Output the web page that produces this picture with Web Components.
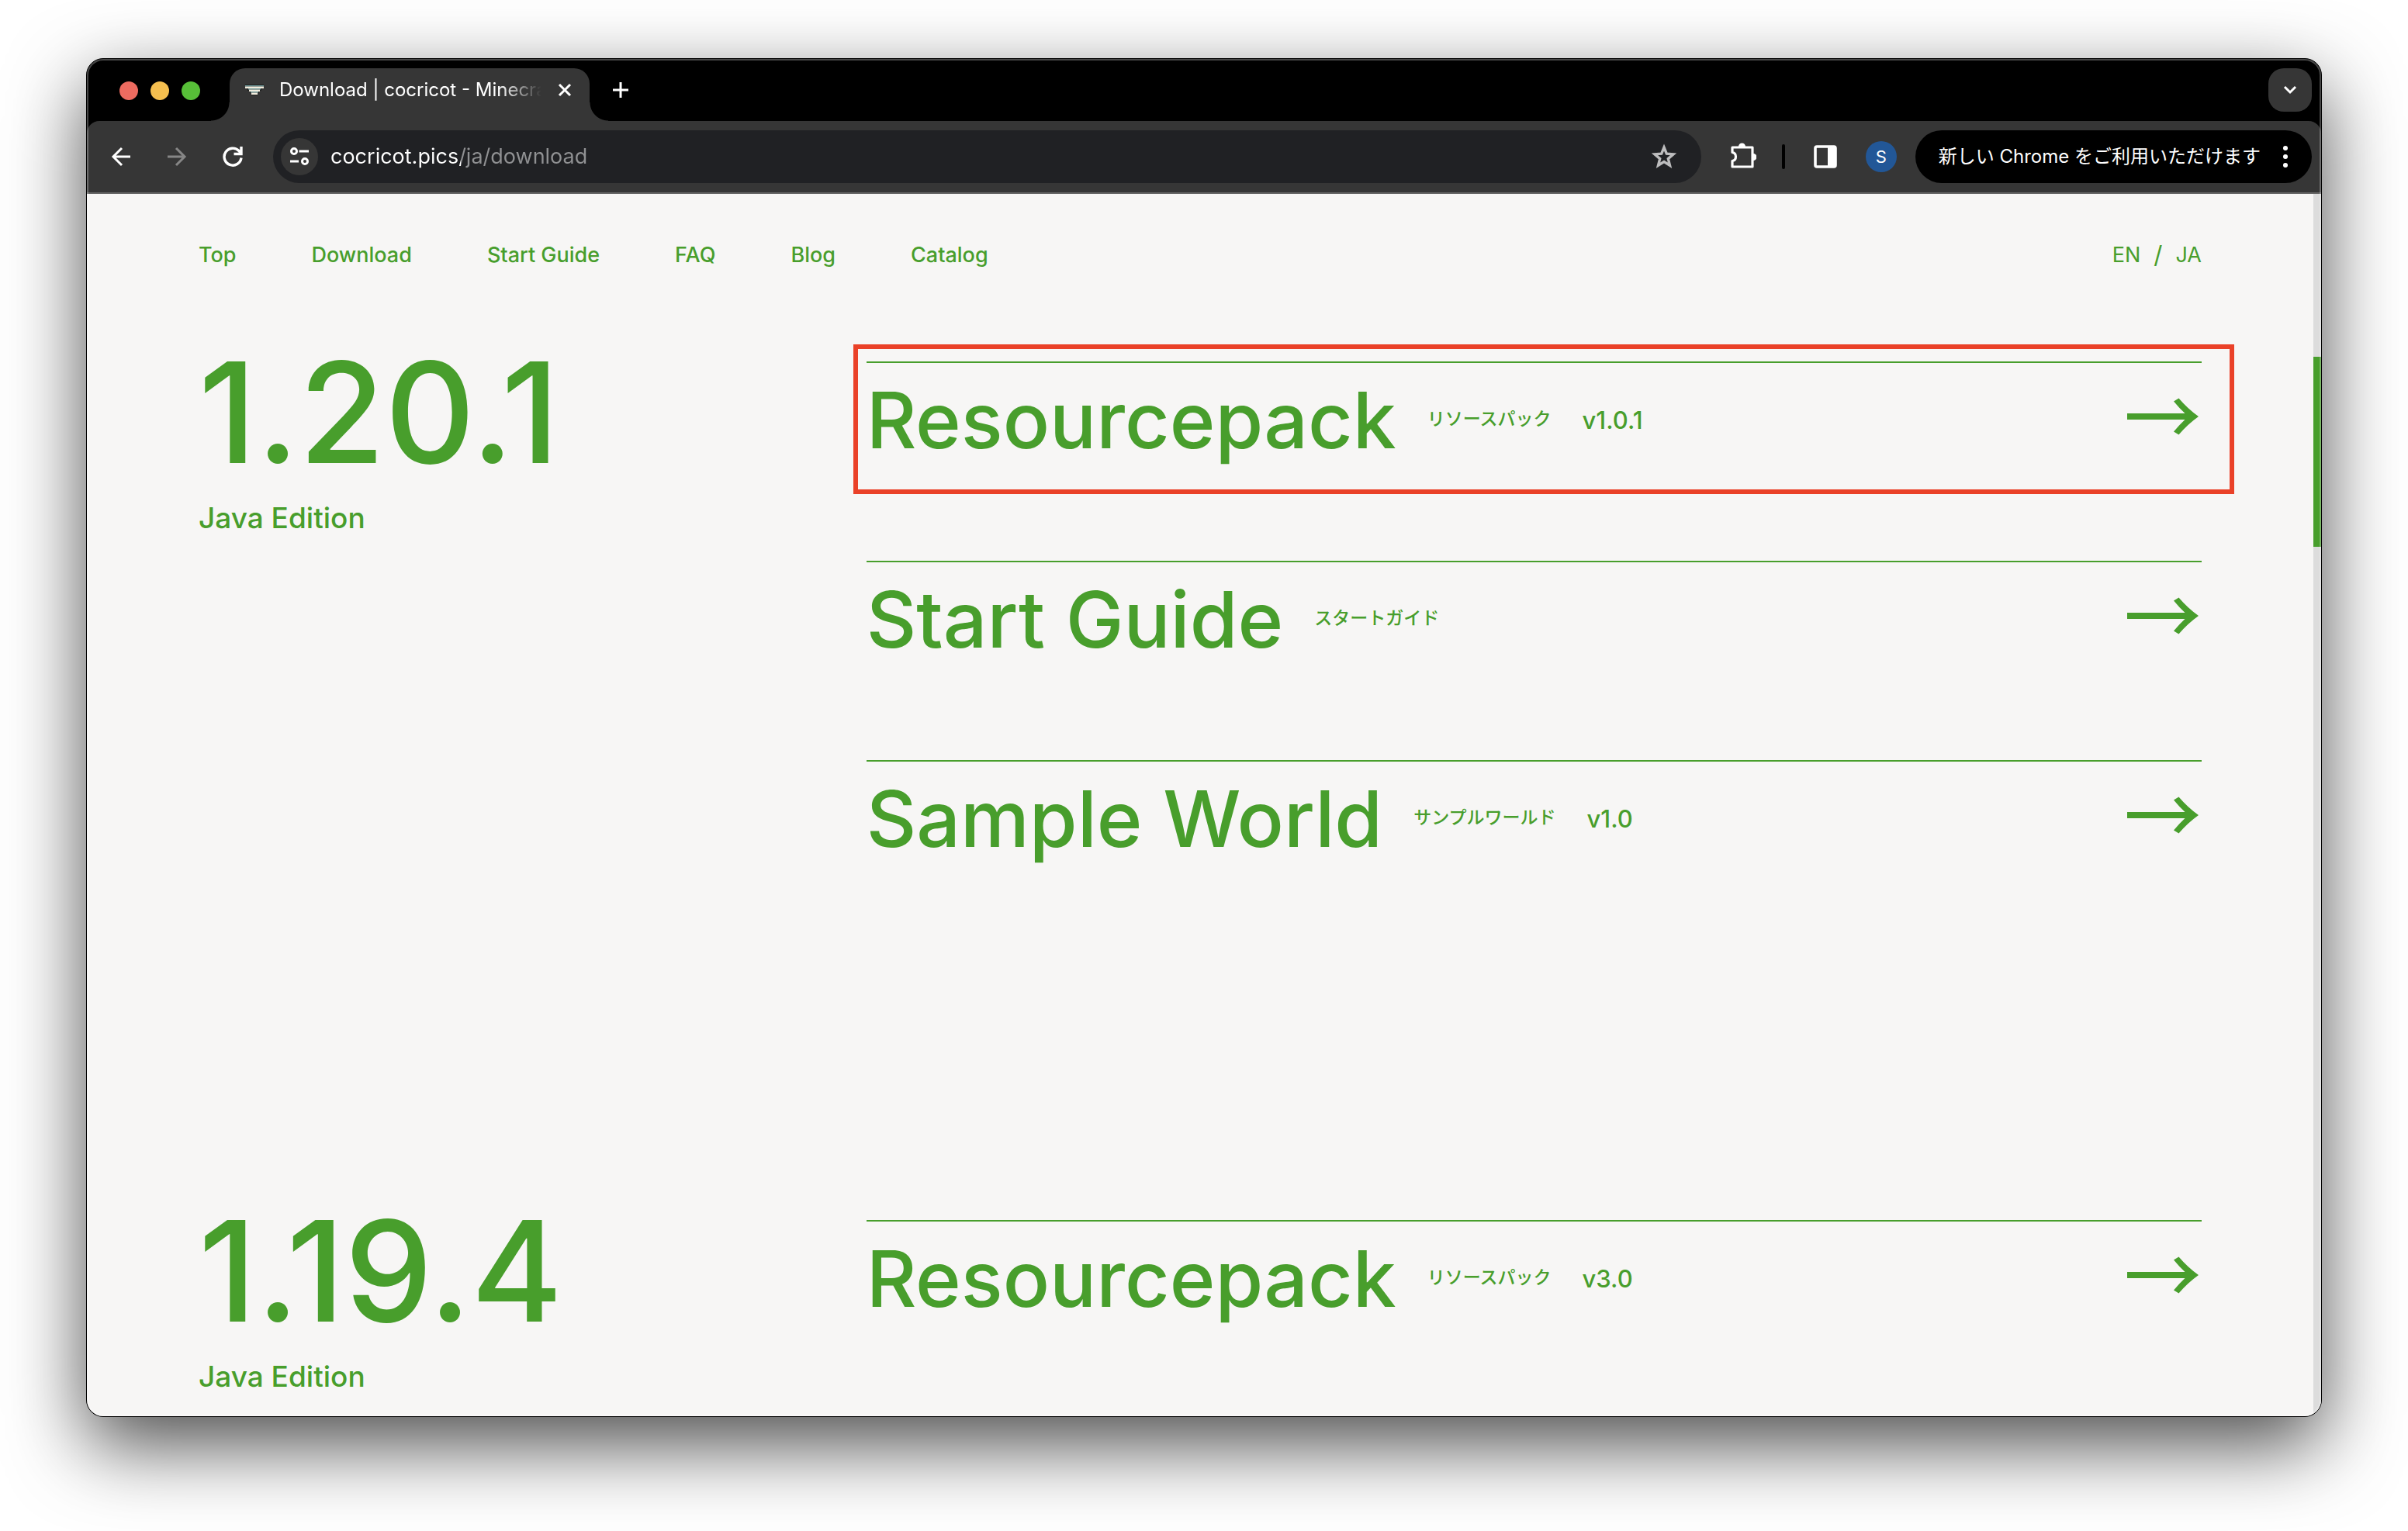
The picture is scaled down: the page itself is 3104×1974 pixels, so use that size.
<!DOCTYPE html>
<html lang="ja">
<head>
<meta charset="utf-8">
<title>Download | cocricot - Minecraft</title>
<style>
  html { height: 100%; background: #fff; }
  body {
    margin: 0; height: 100vh; box-sizing: border-box;
    padding: 75px 111px 147px; display: grid;
    font-family: Inter, "Noto Sans CJK JP", sans-serif;
  }
</style>
</head>
<body>
<browser-window>
  <tab-strip slot="tabs" label="Download | cocricot - Minecra"></tab-strip>
  <browser-toolbar slot="toolbar"></browser-toolbar>
  <site-header></site-header>
  <version-group version="1.20.1" edition="Java Edition">
    <download-item name="Resourcepack" caption="リソースパック" release="v1.0.1" highlighted></download-item>
    <download-item name="Start Guide" caption="スタートガイド"></download-item>
    <download-item name="Sample World" caption="サンプルワールド" release="v1.0"></download-item>
  </version-group>
  <version-group version="1.19.4" edition="Java Edition">
    <download-item name="Resourcepack" caption="リソースパック" release="v3.0"></download-item>
  </version-group>
</browser-window>

<script>
const RESET = `
  :host, *, *::before, *::after { box-sizing: border-box; }
  a { color: inherit; text-decoration: none; }
  button { font: inherit; color: inherit; background: none; border: 0; padding: 0; margin: 0;
    display: grid; place-items: center; flex: none; }
  svg { display: block; fill: none; stroke: currentColor; }
`;

class BaseElement extends HTMLElement {
  connectedCallback() {
    if (this.shadowRoot) return;
    this.attachShadow({ mode: 'open' }).innerHTML = `<style>${RESET}${this.css()}</style>${this.html()}`;
  }
}

customElements.define('browser-window', class extends BaseElement {
  css() { return `
    :host { display: grid; min-height: 0; border: 1px solid #000; border-radius: 22px;
      position: relative; background: #000; box-shadow: 0 36px 100px rgba(0,0,0,.7); }
    .frame { display: flex; flex-direction: column; min-height: 0; overflow: hidden; border-radius: 21px; }
    .edge { position: absolute; inset: 0; border: 2px solid rgba(255,255,255,.28);
      border-radius: 21px; pointer-events: none; }
    .view { flex: 1; min-height: 0; display: flex; background: #f7f6f5; color: #489e2c; }
    main { flex: 1; min-width: 0; padding: 0 5%; overflow: hidden; }
    .scroll { flex: none; width: 10px; background: #dcdcdc; padding-top: 210px; }
    .thumb { height: 245px; background: #489e2c; }
  `; }
  html() { return `
    <div class="frame">
      <slot name="tabs"></slot>
      <slot name="toolbar"></slot>
      <div class="view"><main><slot></slot></main><div class="scroll"><div class="thumb"></div></div></div>
    </div>
    <div class="edge"></div>`; }
});

customElements.define('tab-strip', class extends BaseElement {
  css() { return `
    :host { display: flex; flex: none; height: 80px; padding: 12px 12px 0 42px; background: #000; color: #fff; }
    .lights { display: flex; gap: 16px; padding-top: 17px; margin-right: 38px; }
    .lights button { width: 24px; height: 24px; border-radius: 50%; }
    .tab { position: relative; display: flex; align-items: center; width: 464px; height: 68px;
      padding: 0 18px 12px 20px; background: #363636; border-radius: 20px 20px 0 0; }
    .tab::before, .tab::after { content: ""; position: absolute; bottom: 0; width: 24px; height: 24px; }
    .tab::before { right: 100%; background: radial-gradient(circle at 0 0, transparent 23px, #363636 24px); }
    .tab::after { left: 100%; background: radial-gradient(circle at 100% 0, transparent 23px, #363636 24px); }
    .title { flex: 1; min-width: 0; margin: 0 16px 0 20px; white-space: nowrap;
      font-size: 24px; line-height: 32px; font-weight: 400;
      -webkit-mask-image: linear-gradient(90deg, #000 84%, transparent); mask-image: linear-gradient(90deg, #000 84%, transparent); }
    .close { width: 28px; height: 28px; }
    .new { width: 56px; height: 56px; margin-left: 12px; }
    .search { width: 56px; height: 56px; margin-left: auto; border-radius: 20px; background: #363636; }
  `; }
  html() { return `
    <div class="lights">
      <button aria-label="Close window" style="background:#ed6b60"></button>
      <button aria-label="Minimize" style="background:#f5bf4f"></button>
      <button aria-label="Zoom" style="background:#57bf38"></button>
    </div>
    <div class="tab">
      <svg width="24" height="14" viewBox="0 0 24 14" style="stroke:none">
        <path fill="#1d1f1e" d="M0 0h24v5h-3v3h-3v3h-2v3H8v-3H6V8H3V5H0z"/>
        <path fill="#6f9a9c" d="M0 1h24v1.500H0zM4 5h16v1.500H4zM7 9h10v1.500H7z"/>
        <path fill="#f1ecdd" d="M0 2.500h24V5H0zM5 6.500h14V9H5zM8 10.500h8V13H8z"/>
      </svg>
      <span class="title">${this.getAttribute('label')}</span>
      <button class="close" aria-label="Close tab"><svg width="18" height="18" viewBox="0 0 18 18" stroke-width="3"><path d="M2 2l14 14M16 2L2 16"/></svg></button>
    </div>
    <button class="new" aria-label="New tab"><svg width="20" height="20" viewBox="0 0 20 20" stroke-width="3"><path d="M10 0v20M0 10h20"/></svg></button>
    <button class="search" aria-label="Search tabs"><svg width="18" height="12" viewBox="0 0 18 12" stroke-width="3"><path d="M2 2l7 7 7-7"/></svg></button>`; }
});

customElements.define('browser-toolbar', class extends BaseElement {
  css() { return `
    :host { display: block; flex: none; background: #000; color: #fff; }
    .bar { display: flex; align-items: center; height: 94px; padding: 0 12px 0 18px;
      background: #363636; border-bottom: 2px solid #666; border-radius: 16px 16px 0 0; }
    .nav { display: flex; gap: 20px; margin-right: 26px; }
    .nav button { width: 52px; height: 52px; }
    .off { color: #868686; }
    .box { flex: 1; min-width: 0; display: flex; align-items: center; height: 68px; border-radius: 34px;
      background: #202124; padding: 0 26px 0 10px; }
    .chip { width: 48px; height: 48px; border-radius: 50%; background: #363636; }
    input { flex: 1; min-width: 0; margin: 0 20px 0 16px; padding: 0; border: 0; outline: 0; font: inherit;
      font-size: 27px; line-height: 40px; height: 40px; color: transparent;
      background: linear-gradient(90deg, #fff 168px, #909193 168px);
      -webkit-background-clip: text; background-clip: text; }
    .star { width: 44px; height: 44px; color: #bcbcbd; }
    .ext { width: 52px; height: 52px; margin-left: 27px; }
    .rule { width: 4px; height: 32px; border-radius: 2px; background: #000; margin: 0 26px 0 25px; }
    .avatar { width: 40px; height: 40px; border-radius: 50%; background: #225797; font-size: 22px; margin: 0 24px 0 26px; }
    .update { display: flex; align-items: center; height: 68px; padding: 0 30px; gap: 28px;
      border-radius: 34px; background: #000; font-size: 24px; line-height: 36px; font-weight: 400; white-space: nowrap; }
  `; }
  html() { return `
    <div class="bar">
      <div class="nav">
        <button aria-label="Back"><svg width="26" height="26" viewBox="0 0 26 26" stroke-width="3"><path d="M25 13H3M14 2L3 13l11 11"/></svg></button>
        <button class="off" aria-label="Forward"><svg width="26" height="26" viewBox="0 0 26 26" stroke-width="3"><path d="M1 13h22M12 2l11 11-11 11"/></svg></button>
        <button aria-label="Reload"><svg width="28" height="28" viewBox="0 0 28 28" stroke-width="3.400"><path d="M25 15.500A11 11 0 1 1 22 6.500L24.500 9M25 1v9.500H15.500"/></svg></button>
      </div>
      <div class="box">
        <button class="chip" aria-label="Site information"><svg width="26" height="24" viewBox="0 0 26 24" stroke-width="3"><circle cx="6" cy="5" r="3.500"/><path d="M12.500 5H25M1 18h11"/><circle cx="20" cy="18" r="3.500"/></svg></button>
        <input type="text" aria-label="Address" value="cocricot.pics/ja/download">
        <button class="star" aria-label="Bookmark"><svg width="34" height="34" viewBox="0 0 34 34" stroke-width="3.400"><path d="M17 5l3.300 8.200 8.700.700-6.700 5.700 2.200 8.600L17 23.500l-7.500 4.700 2.200-8.600L5 13.900l8.700-.700z"/></svg></button>
      </div>
      <button class="ext" aria-label="Extensions"><svg width="36" height="36" viewBox="0 0 36 36" stroke-width="3.200" stroke-linejoin="round"><path d="M5 6h26v25H5v-7.500c6-1 6-10 0-11z"/><path d="M13 5a4.500 4.500 0 0 1 9 0zM32 14a4.500 4.500 0 0 1 0 9z" style="fill:currentColor;stroke:none"/></svg></button>
      <div class="rule"></div>
      <button class="ext" style="margin:0" aria-label="Side panel"><svg width="30" height="30" viewBox="0 0 30 30"><rect x="2" y="2" width="26" height="26" rx="2" stroke-width="3.600"/><path style="fill:currentColor;stroke:none" d="M18 2h10v26H18z"/></svg></button>
      <button class="avatar" aria-label="Profile">S</button>
      <button class="update">新しい Chrome をご利用いただけます<svg width="8" height="28" viewBox="0 0 8 28" style="fill:currentColor;stroke:none"><circle cx="4" cy="3" r="3"/><circle cx="4" cy="14" r="3"/><circle cx="4" cy="25" r="3"/></svg></button>
    </div>`; }
});

customElements.define('site-header', class extends BaseElement {
  css() { return `
    :host { display: flex; justify-content: space-between; align-items: center; height: 158px;
      font-size: 27px; line-height: 32px; font-weight: 500; }
    nav { display: flex; gap: 97px; }
    .lang { display: flex; gap: 17px; font-weight: 400; }
    .lang span { font-size: 31px; }
  `; }
  html() { return `
    <nav>${['Top', 'Download', 'Start Guide', 'FAQ', 'Blog', 'Catalog'].map(t => `<a href="#">${t}</a>`).join('')}</nav>
    <div class="lang"><a href="#">EN</a><span>/</span><a href="#">JA</a></div>`; }
});

customElements.define('version-group', class extends BaseElement {
  css() { return `
    :host { display: grid; grid-template-columns: 1fr 2fr; align-items: start; margin: 58px 0 443px; }
    h2 { margin: 0; font-size: 180px; line-height: 131px; font-weight: 500; }
    p { margin: 41px 0 0; font-size: 37px; line-height: 60px; font-weight: 500; }
    .items { display: grid; gap: 107px; }
  `; }
  html() { return `
    <div><h2>${this.getAttribute('version')}</h2><p>${this.getAttribute('edition')}</p></div>
    <div class="items"><slot></slot></div>`; }
});

customElements.define('download-item', class extends BaseElement {
  css() { return `
    :host { display: block; position: relative; }
    a { display: flex; align-items: center; gap: 40px; height: 150px; border-top: 2px solid; white-space: nowrap; }
    .name { font-size: 100px; line-height: 120px; font-weight: 500; }
    .caption { font-size: 23px; line-height: 32px; font-weight: 500; padding-bottom: 4px; }
    .release { font-size: 31px; line-height: 32px; font-weight: 500; }
    svg { margin-left: auto; fill: currentColor; stroke: none; }
    :host([highlighted])::after { content: ""; position: absolute; inset: -22px -42px -21px -17px;
      border: 6px solid #ea4128; pointer-events: none; }
  `; }
  html() {
    const release = this.getAttribute('release');
    return `
    <a href="#"><span class="name">${this.getAttribute('name')}</span>
      <span class="caption">${this.getAttribute('caption')}</span>
      ${release ? `<span class="release">${release}</span>` : ''}
      <svg width="96" height="58" viewBox="0 0 96 58"><path d="M0 20h74.500Q67 13 60 4.500L66.500 .500Q78 14 92 24Q78 34 66.500 47.500L60 43.500Q67 35 74.500 28H0z"/></svg>
    </a>`;
  }
});
</script>
</body>
</html>
